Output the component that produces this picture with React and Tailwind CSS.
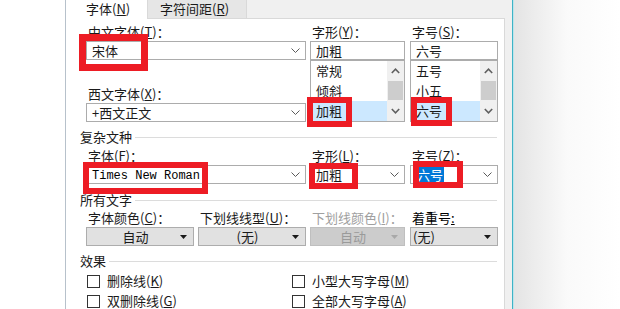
import React from "react";

// accelerator letter, e.g. (N)
function Acc({ c }) {
  return (
    <>
      (<span className="underline">{c}</span>)
    </>
  );
}

function Label({ children, className = "" }) {
  return <div className={"h-[16px] leading-[16px] pl-[2px] whitespace-nowrap " + className}>{children}</div>;
}

function Chevron() {
  return (
    <svg width="9" height="5" viewBox="0 0 9 5" className="shrink-0">
      <polyline points="0.5,0.5 4.5,4.5 8.5,0.5" fill="none" stroke="#5a5a5a" strokeWidth="1" />
    </svg>
  );
}

function Caret({ color = "#1a1a1a" }) {
  return (
    <svg width="7" height="4" viewBox="0 0 7 4" className="shrink-0">
      <polygon points="0,0 7,0 3.5,4" fill={color} />
    </svg>
  );
}

function Combo({ children, className = "" }) {
  return (
    <div className={"mt-[1px] h-[19px] border border-[#acacac] bg-white flex items-center justify-between pl-[5px] pr-[5px] " + className}>
      <div className="leading-[17px] whitespace-nowrap">{children}</div>
      <Chevron />
    </div>
  );
}

function Drop({ children, disabled, left }) {
  return (
    <div
      className={
        "mt-[1px] h-[19px] border flex items-center pr-[6px] " +
        (disabled ? "bg-[#cccccc] border-[#bfbfbf] text-[#9a9a9a]" : "bg-[#e1e1e1] border-[#adadad]")
      }
    >
      <div className={"flex-1 leading-[17px] " + (left ? "pl-[2px]" : "text-center pl-[4px]")}>{children}</div>
      <Caret color={disabled ? "#a8a8a8" : "#1a1a1a"} />
    </div>
  );
}

function ListBox({ value, items, selected }) {
  return (
    <>
      <div className="mt-[1px] h-[19px] border border-[#acacac] bg-white pl-[5px] leading-[17px]">{value}</div>
      <div className="h-[62px] border border-[#acacac] bg-white flex">
        <div className="flex-1 flex flex-col">
          {items.map((it, i) => (
            <div
              key={it}
              className={"h-[20px] leading-[20px] pl-[5px] " + (i === selected ? "bg-[#cce8ff]" : "")}
            >
              {it}
            </div>
          ))}
        </div>
        <div className="w-[17px] bg-[#f0f0f0] flex flex-col">
          <div className="h-[20px] flex items-center justify-center">
            <svg width="9" height="6" viewBox="0 0 9 6">
              <polyline points="0.8,5 4.5,1.2 8.2,5" fill="none" stroke="#606060" strokeWidth="1.6" />
            </svg>
          </div>
          <div className="h-[19px] mx-[1px] bg-[#cdcdcd]" />
          <div className="flex-1" />
          <div className="h-[20px] flex items-center justify-center">
            <svg width="9" height="6" viewBox="0 0 9 6">
              <polyline points="0.8,1 4.5,4.8 8.2,1" fill="none" stroke="#606060" strokeWidth="1.6" />
            </svg>
          </div>
        </div>
      </div>
    </>
  );
}

function Group({ title, className = "" }) {
  return (
    <div className={"h-[16px] flex items-center pl-[14px] pr-[7px] " + className}>
      <span className="leading-[16px] whitespace-nowrap">{title}</span>
      <div className="flex-1 h-px bg-[#dcdcdc] ml-[3px]" />
    </div>
  );
}

function Check({ children }) {
  return (
    <div className="h-[16px] flex items-center">
      <div className="w-[13px] h-[13px] border border-[#333333] bg-white shrink-0" />
      <span className="ml-[7px] leading-[16px] whitespace-nowrap">{children}</span>
    </div>
  );
}

function Mark({ className }) {
  return <div className={"absolute border-[#ed1c24] " + className} />;
}

export default function App() {
  return (
    <div className="relative w-[620px] h-[309px] overflow-hidden bg-white flex text-[13px] text-[#1a1a1a] font-['Noto_Sans_CJK_SC',sans-serif]">
      <div className="w-[65px] shrink-0 bg-white" />
      <div className="w-px shrink-0 bg-[#b7c1cb]" />

      {/* dialog */}
      <div className="w-[446px] shrink-0 bg-[#f0f0f0] flex flex-col">
        {/* tabs */}
        <div className="h-[19px] flex">
          <div className="w-[81px] bg-white pl-[20px] leading-[18px]">
            字体<Acc c="N" />
          </div>
          <div className="w-[100px] bg-[#e6e6e6] border-l border-r border-b border-[#d9d9d9] pl-[12px] leading-[17px]">
            字符间距<Acc c="R" />
          </div>
          <div className="w-[258px] border-b border-[#d9d9d9]" />
        </div>

        {/* page */}
        <div className="w-[439px] flex-1 bg-white border-r border-[#d9d9d9] pt-[5px]">
          {/* row A */}
          <div className="flex pl-[20px]">
            <div className="w-[220px]">
              <Label>
                中文字体<Acc c="T" />：
              </Label>
              <Combo>宋体</Combo>
              <Label className="mt-[26px]">
                西文字体<Acc c="X" />：
              </Label>
              <Combo>+西文正文</Combo>
            </div>
            <div className="w-[95px] ml-[4px]">
              <Label>
                字形<Acc c="Y" />：
              </Label>
              <ListBox value="加粗" items={["常规", "倾斜", "加粗"]} selected={2} />
            </div>
            <div className="w-[88px] ml-[5px]">
              <Label className="pl-0">
                字号<Acc c="S" />：
              </Label>
              <ListBox value="六号" items={["五号", "小五", "六号"]} selected={2} />
            </div>
          </div>

          <Group title="复杂文种" className="mt-[7px]" />

          {/* row B */}
          <div className="flex pl-[20px] mt-[3px]">
            <div className="w-[220px]">
              <Label>
                字体<Acc c="F" />：
              </Label>
              <Combo>
                <span className="font-['Liberation_Mono',monospace] text-[12px] text-black">Times New Roman</span>
              </Combo>
            </div>
            <div className="w-[95px] ml-[4px]">
              <Label>
                字形<Acc c="L" />：
              </Label>
              <Combo>加粗</Combo>
            </div>
            <div className="w-[88px] ml-[5px]">
              <Label className="pl-0">
                字号<Acc c="Z" />：
              </Label>
              <Combo className="pl-[3px]">
                <span className="bg-[#0078d7] text-white px-[1px]">六号</span>
              </Combo>
            </div>
          </div>

          <Group title="所有文字" className="mt-[8px]" />

          {/* row C */}
          <div className="flex pl-[20px] mt-[2px]">
            <div className="w-[108px]">
              <Label>
                字体颜色<Acc c="C" />：
              </Label>
              <Drop>自动</Drop>
            </div>
            <div className="w-[108px] ml-[4px]">
              <Label className="pl-0">
                下划线线型<Acc c="U" />：
              </Label>
              <Drop>(无)</Drop>
            </div>
            <div className="w-[95px] ml-[4px]">
              <Label className="text-[#a0a0a0]">
                下划线颜色<Acc c="I" />：
              </Label>
              <Drop disabled>自动</Drop>
            </div>
            <div className="w-[88px] ml-[5px]">
              <Label className="pl-0 text-black">
                着重号<span className="underline">:</span>
              </Label>
              <Drop left>(无)</Drop>
            </div>
          </div>

          <Group title="效果" className="mt-[7px]" />

          {/* effects */}
          <div className="flex pl-[21px] mt-[4px]">
            <div className="w-[205px] flex flex-col gap-[4px]">
              <Check>
                删除线<Acc c="K" />
              </Check>
              <Check>
                双删除线<Acc c="G" />
              </Check>
            </div>
            <div className="flex flex-col gap-[4px]">
              <Check>
                小型大写字母<Acc c="M" />
              </Check>
              <Check>
                全部大写字母<Acc c="A" />
              </Check>
            </div>
          </div>
        </div>
      </div>

      <div className="w-px shrink-0 bg-[#3fb3c6]" />
      <div className="w-px shrink-0 bg-[#bfe4ea]" />
      <div className="flex-1 bg-gradient-to-r from-[#e4e4e4] via-[#fafafa] to-white" />

      {/* red annotation boxes */}
      <Mark className="left-[79px] top-[34px] w-[69px] h-[37px] border-[7px]" />
      <Mark className="left-[307px] top-[97px] w-[45px] h-[30px] border-[6px]" />
      <Mark className="left-[411px] top-[97px] w-[41px] h-[29px] border-[6px]" />
      <Mark className="left-[83px] top-[162px] w-[125px] h-[32px] border-[6px]" />
      <Mark className="left-[309px] top-[163px] w-[49px] h-[26px] border-[6px]" />
      <Mark className="left-[413px] top-[161px] w-[50px] h-[27px] border-[6px]" />
    </div>
  );
}
